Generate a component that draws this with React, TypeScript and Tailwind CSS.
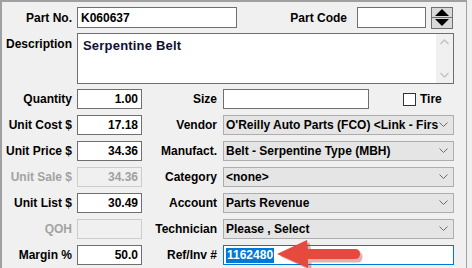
import React from "react";

const font = { fontFamily: '"Liberation Sans", Arial, sans-serif' };

function Label({ children, w, disabled }: { children: React.ReactNode; w: string; disabled?: boolean }) {
  return (
    <div className={`${w} shrink-0 text-right font-bold text-[12px] leading-none ${disabled ? "text-[#a3a3a3]" : "text-black"}`}>
      {children}
    </div>
  );
}

function NumBox({ value, disabled }: { value?: string; disabled?: boolean }) {
  return (
    <div
      className={`w-[65px] h-[20px] ml-[5px] shrink-0 flex items-center justify-end pr-[3px] font-bold text-[12px] border ${
        disabled ? "bg-[#f0f0f0] border-[#cccccc] text-[#a0a0a0]" : "bg-white border-[#6f6f6f] text-black"
      }`}
    >
      {value}
    </div>
  );
}

function Chevron() {
  return (
    <svg width="9" height="6" viewBox="0 0 9 6" className="shrink-0">
      <path d="M0.5 0.5 L4.5 4.5 L8.5 0.5" fill="none" stroke="#6a6a6a" strokeWidth="1" />
    </svg>
  );
}

function Select({ value }: { value: string }) {
  return (
    <div className="w-[231px] h-[20px] ml-[6px] shrink-0 flex items-center bg-[#e5e5e5] border border-[#adadad] pl-[2px] pr-[5px]">
      <div className="flex-1 overflow-hidden whitespace-nowrap font-bold text-[12px] text-black">{value}</div>
      <Chevron />
    </div>
  );
}

function Row({ children }: { children: React.ReactNode }) {
  return <div className="flex items-center h-[20px]">{children}</div>;
}

export default function App() {
  return (
    <div className="relative w-[472px] h-[268px] bg-[#f0f0f0] overflow-hidden" style={font}>
      <div className="w-[467px] h-[268px] border-l-2 border-t-2 border-r border-[#a0a0a0] pt-[5px] flex flex-col">
        {/* Row 1 */}
        <div className="flex items-center h-[21px]">
          <Label w="w-[70px]">Part No.</Label>
          <div className="w-[160px] h-[21px] ml-[5px] bg-white border border-[#6f6f6f] flex items-center pl-[3px] font-bold text-[12px] text-black">
            K060637
          </div>
          <Label w="w-[110px]">Part Code</Label>
          <div className="w-[69px] h-[21px] ml-[10px] bg-white border border-[#6f6f6f]" />
          <div className="ml-[5px] w-[22px] h-[22px] flex flex-col">
            <div className="h-[11px] bg-[#d9d9d9] border border-[#6f6f6f] flex items-center justify-center">
              <svg width="14" height="7" viewBox="0 0 14 7">
                <path d="M0 7 L7 0 L14 7 Z" fill="#000" />
              </svg>
            </div>
            <div className="h-[11px] bg-[#d9d9d9] border border-t-0 border-[#6f6f6f] flex items-center justify-center">
              <svg width="14" height="7" viewBox="0 0 14 7">
                <path d="M0 0 L14 0 L7 7 Z" fill="#000" />
              </svg>
            </div>
          </div>
        </div>

        {/* Description */}
        <div className="flex mt-[5px]">
          <div className="w-[70px] shrink-0 text-right font-bold text-[12px] leading-none pt-[5px]">Description</div>
          <div className="w-[377px] h-[51px] ml-[5px] bg-white border border-[#6f6f6f] flex">
            <div className="flex-1 pl-[5px] pt-[5px] font-bold text-[13px] tracking-[0.2px] leading-none text-[#101030]">Serpentine Belt</div>
            <div className="w-[17px] bg-[#f0f0f0] flex flex-col justify-between items-center py-[5px]">
              <svg width="9" height="6" viewBox="0 0 9 6">
                <path d="M0.5 5 L4.5 1 L8.5 5" fill="none" stroke="#c2c2c2" strokeWidth="1.3" />
              </svg>
              <svg width="9" height="6" viewBox="0 0 9 6">
                <path d="M0.5 1 L4.5 5 L8.5 1" fill="none" stroke="#c2c2c2" strokeWidth="1.3" />
              </svg>
            </div>
          </div>
        </div>

        <div className="flex flex-col gap-[6px] mt-[5px]">
          <Row>
            <Label w="w-[70px]">Quantity</Label>
            <NumBox value="1.00" />
            <Label w="w-[75px]">Size</Label>
            <div className="w-[146px] h-[20px] ml-[6px] bg-white border border-[#6f6f6f]" />
            <div className="ml-[34px] w-[13px] h-[13px] bg-white border border-[#333]" />
            <div className="ml-[4px] font-bold text-[12px]">Tire</div>
          </Row>
          <Row>
            <Label w="w-[70px]">Unit Cost $</Label>
            <NumBox value="17.18" />
            <Label w="w-[75px]">Vendor</Label>
            <Select value="O'Reilly Auto Parts (FCO) <Link - Firs" />
          </Row>
          <Row>
            <Label w="w-[70px]">Unit Price $</Label>
            <NumBox value="34.36" />
            <Label w="w-[75px]">Manufact.</Label>
            <Select value="Belt - Serpentine Type (MBH)" />
          </Row>
          <Row>
            <Label w="w-[70px]" disabled>Unit Sale $</Label>
            <NumBox value="34.36" disabled />
            <Label w="w-[75px]">Category</Label>
            <Select value="<none>" />
          </Row>
          <Row>
            <Label w="w-[70px]">Unit List $</Label>
            <NumBox value="30.49" />
            <Label w="w-[75px]">Account</Label>
            <Select value="Parts Revenue" />
          </Row>
          <Row>
            <Label w="w-[70px]" disabled>QOH</Label>
            <NumBox disabled />
            <Label w="w-[75px]">Technician</Label>
            <Select value="Please , Select" />
          </Row>
          <Row>
            <Label w="w-[70px]">Margin %</Label>
            <NumBox value="50.0" />
            <Label w="w-[75px]">Ref/Inv #</Label>
            <div className="w-[231px] h-[20px] ml-[6px] bg-white border border-[#0078d7] flex items-center pl-[2px]">
              <span className="bg-[#0078d7] text-white font-bold text-[12px] leading-[15px] px-[1px]">1162480</span>
            </div>
          </Row>
        </div>
      </div>

      {/* red arrow annotation */}
      <svg className="absolute left-[270px] top-[236px]" width="100" height="32" viewBox="0 0 100 32">
        <path d="M9 19 L38 5 L40 14 L86 14 Q91 14 91 19.5 Q91 25 86 25 L40 25 L40 33 Z" fill="#9a2c25" opacity="0.35" transform="translate(1.5,1.5)" />
        <path d="M7 18 L37 4 L38 13 L85 13 Q90 13 90 18 Q90 23 85 23 L38 23 L38 32 Z" fill="#e64a3e" />
      </svg>
    </div>
  );
}
